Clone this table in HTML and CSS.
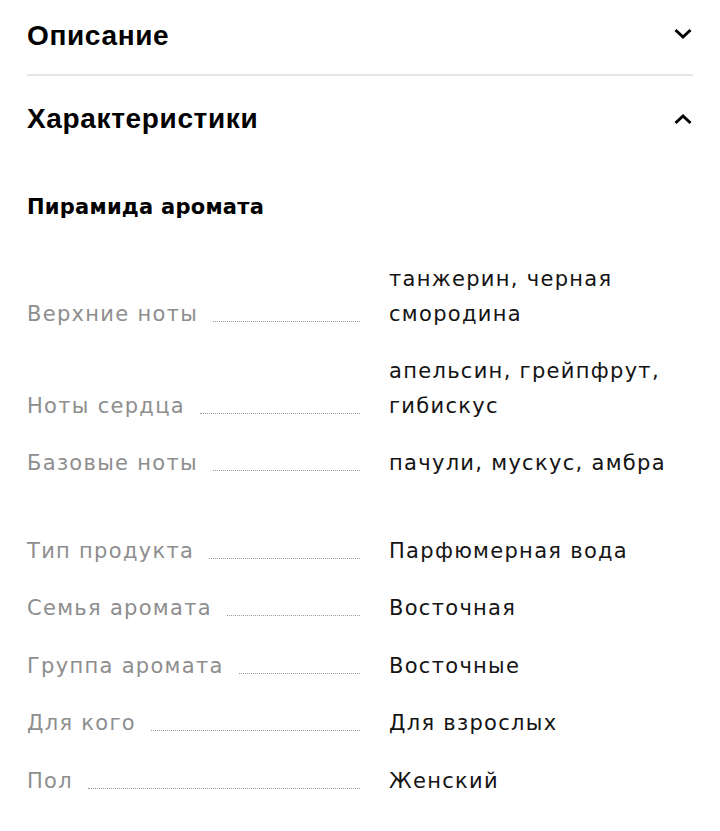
FILE: index.html
```html
<!DOCTYPE html>
<html lang="ru">
<head>
<meta charset="utf-8">
<link rel="stylesheet" href="styles.css">
</head>
<body>
<div class="page">
  <div class="acc-head closed">
    <span class="acc-title">Описание</span>
    <svg class="chev" width="20" height="12" viewBox="0 0 20 12"><path d="M2.5 2 L10 9 L17.5 2" fill="none" stroke="#000" stroke-width="3"/></svg>
  </div>
  <div class="acc-head open">
    <span class="acc-title">Характеристики</span>
    <svg class="chev" width="20" height="12" viewBox="0 0 20 12"><path d="M2.5 10 L10 3 L17.5 10" fill="none" stroke="#000" stroke-width="3"/></svg>
  </div>
  <h3 class="sub">Пирамида аромата</h3>
  <div class="group">
    <div class="row"><div class="label"><span>Верхние ноты</span><i class="dots"></i></div><div class="value">танжерин, черная смородина</div></div>
    <div class="row"><div class="label"><span>Ноты сердца</span><i class="dots"></i></div><div class="value">апельсин, грейпфрут, гибискус</div></div>
    <div class="row"><div class="label"><span>Базовые ноты</span><i class="dots"></i></div><div class="value">пачули, мускус, амбра</div></div>
  </div>
  <div class="group second">
    <div class="row"><div class="label"><span>Тип продукта</span><i class="dots"></i></div><div class="value">Парфюмерная вода</div></div>
    <div class="row"><div class="label"><span>Семья аромата</span><i class="dots"></i></div><div class="value">Восточная</div></div>
    <div class="row"><div class="label"><span>Группа аромата</span><i class="dots"></i></div><div class="value">Восточные</div></div>
    <div class="row"><div class="label"><span>Для кого</span><i class="dots"></i></div><div class="value">Для взрослых</div></div>
    <div class="row"><div class="label"><span>Пол</span><i class="dots"></i></div><div class="value">Женский</div></div>
  </div>
</div>
</body>
</html>
```
FILE: styles.css
```css
html, body {
  margin: 0;
  padding: 0;
  background: #fff;
}
body {
  font-family: "DejaVu Sans", Inter, sans-serif;
  color: #111;
}
.page {
  padding: 0 27px;
}
.acc-head {
  display: flex;
  align-items: center;
  justify-content: space-between;
}
.acc-head.closed {
  box-sizing: border-box;
  height: 76px;
  padding-bottom: 3px;
  border-bottom: 2px solid #e6e6e6;
}
.acc-head.closed .chev {
  margin-bottom: 3px;
}
.acc-head.open {
  height: 86px;
}
.acc-title {
  font-family: "Liberation Sans", Arial, sans-serif;
  font-weight: 700;
  font-size: 28px;
  line-height: 32px;
  letter-spacing: 0.65px;
  color: #000;
}
.sub {
  margin: 0;
  padding-top: 32px;
  font-size: 21px;
  font-weight: 700;
  line-height: 26px;
  letter-spacing: 0.25px;
  color: #000;
}
.group {
  display: flex;
  flex-direction: column;
  gap: 22px;
  margin-top: 42px;
}
.group.second {
  margin-top: 53px;
  gap: 22.4px;
}
.row {
  display: flex;
  align-items: flex-end;
  font-size: 21px;
  line-height: 35px;
  letter-spacing: 1.3px;
}
.label {
  width: 333px;
  flex: none;
  display: flex;
  align-items: flex-end;
  color: #8e8e8e;
}
.label span {
  white-space: nowrap;
}
.dots {
  flex: 1;
  margin: 0 0 10px 15px;
  border-bottom: 1px dotted #9a9a9a;
}
.value {
  margin-left: 29px;
  flex: 1;
  color: #141414;
  max-width: 290px;
}
```
